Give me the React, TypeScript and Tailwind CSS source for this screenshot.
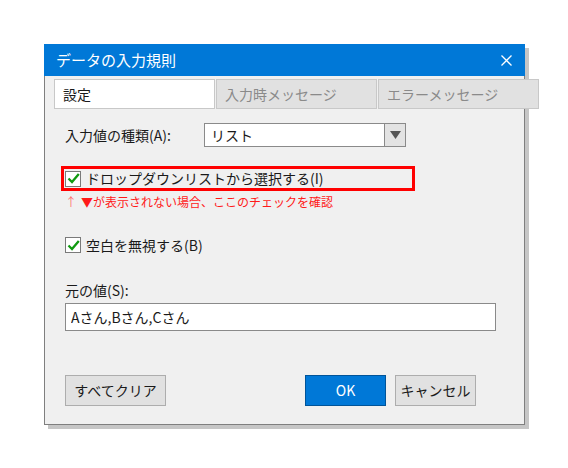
import React, { useState } from 'react';

const font = { fontFamily: '"Noto Sans CJK JP", "Noto Sans", sans-serif' };

function CheckBox({ checked, onToggle }: { checked: boolean; onToggle: () => void }) {
  return (
    <button
      type="button"
      onClick={onToggle}
      className="w-[16px] h-[16px] bg-white border border-[#7a7a7a] flex items-center justify-center shrink-0"
    >
      {checked && (
        <svg width="13" height="13" viewBox="0 0 13 13">
          <path d="M1.5 6.5 L5 10 L11.8 2" fill="none" stroke="#109a10" strokeWidth="2.3" />
        </svg>
      )}
    </button>
  );
}

export default function App() {
  const [useDropdown, setUseDropdown] = useState(true);
  const [ignoreBlank, setIgnoreBlank] = useState(true);
  const [source, setSource] = useState('Aさん,Bさん,Cさん');

  const tabs = ['設定', '入力時メッセージ', 'エラーメッセージ'];

  return (
    <div className="w-[568px] h-[468px] bg-white pl-[44px] pt-[44px]" style={font}>
      <div className="w-[481px] bg-[#f0f0f0] border-x border-b border-[#7f7f7f] shadow-[4px_4px_0_0_#c6c6c6] text-[14px] text-[#1a1a1a]">
        {/* title bar */}
        <div className="h-[32px] -mx-px bg-[#0078d7] flex items-center justify-between pl-[12px] pr-[13px]">
          <span className="text-white text-[15px]">データの入力規則</span>
          <svg width="11" height="11" viewBox="0 0 11 11">
            <path d="M0.5 0.5 L10.5 10.5 M10.5 0.5 L0.5 10.5" stroke="white" strokeWidth="1.3" />
          </svg>
        </div>

        {/* tabs */}
        <div className="flex gap-[1px] pl-[9px] mt-[3px] h-[30px]">
          {tabs.map((t, i) => (
            <div
              key={t}
              className={
                i === 0
                  ? 'w-[161px] shrink-0 bg-white border border-[#c8c8c8] flex items-center pl-[8px] text-[#1a1a1a]'
                  : 'w-[161px] shrink-0 bg-[#e1e1e1] border border-[#c8c8c8] flex items-center pl-[8px] text-[#8a8a8a]'
              }
            >
              {t}
            </div>
          ))}
        </div>

        <div className="pl-[20px] pr-[29px]">
          {/* validation type */}
          <div className="flex items-center mt-[14px] h-[24px]">
            <span className="w-[139px]">入力値の種類(A):</span>
            <div className="w-[202px] h-[24px] bg-white border border-[#8a8a8a] flex">
              <span className="flex-1 pl-[6px] leading-[22px]">リスト</span>
              <div className="w-[21px] bg-[#e3e3e3] border-l border-[#8a8a8a] flex items-center justify-center">
                <svg width="11" height="8" viewBox="0 0 11 8">
                  <path d="M0 0 H11 L5.5 8 Z" fill="#555555" />
                </svg>
              </div>
            </div>
          </div>

          {/* in-cell dropdown */}
          <div className="mt-[19px] -ml-[4px] w-[354px] h-[25px] border-[3px] border-[#ff0000] flex items-center gap-[5px] pl-[1px]">
            <CheckBox checked={useDropdown} onToggle={() => setUseDropdown(!useDropdown)} />
            <span>ドロップダウンリストから選択する(I)</span>
          </div>
          <div className="mt-[2px] h-[17px] text-[12px] text-[#ff1a1a] leading-[17px] flex items-center">
            <span className="text-[#ff7070] mr-[4px]">↑</span>
            <span>▼が表示されない場合、ここのチェックを確認</span>
          </div>

          {/* ignore blank */}
          <div className="mt-[25px] h-[20px] flex items-center gap-[5px]">
            <CheckBox checked={ignoreBlank} onToggle={() => setIgnoreBlank(!ignoreBlank)} />
            <span>空白を無視する(B)</span>
          </div>

          {/* source */}
          <div className="mt-[26px] h-[19px] leading-[19px]">元の値(S):</div>
          <input
            value={source}
            onChange={(e) => setSource(e.target.value)}
            className="mt-[3px] w-[431px] h-[28px] bg-white border border-[#8a8a8a] px-[5px] outline-none text-[14px] text-[#1a1a1a]"
          />

          {/* buttons */}
          <div className="mt-[44px] mb-[18px] flex">
            <button className="w-[101px] h-[31px] bg-[#e1e1e1] border border-[#adadad]">すべてクリア</button>
            <button className="ml-[139px] w-[81px] h-[31px] bg-[#0078d7] border border-[#005499] text-white">OK</button>
            <button className="ml-[9px] w-[81px] h-[31px] bg-[#e1e1e1] border border-[#adadad]">キャンセル</button>
          </div>
        </div>
      </div>
    </div>
  );
}
